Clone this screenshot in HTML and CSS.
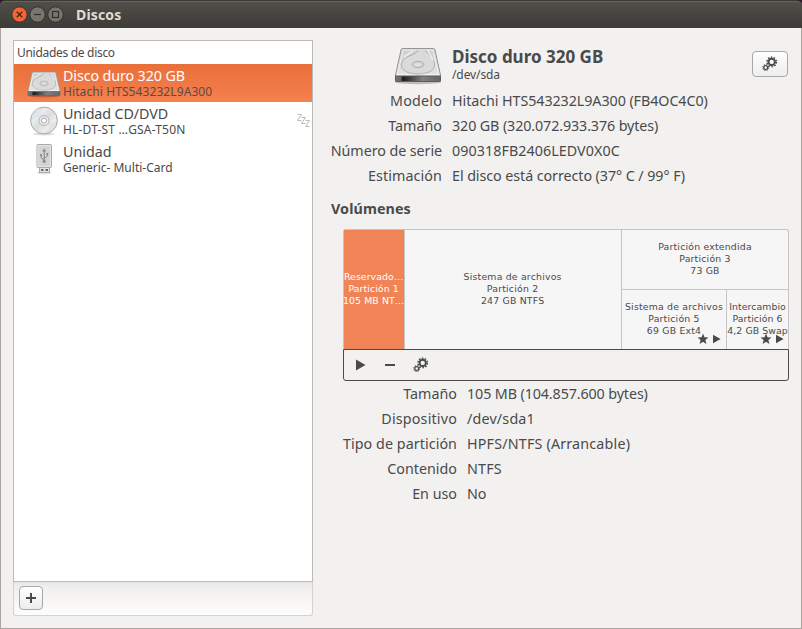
FILE: index.html
```html
<!DOCTYPE html>
<html lang="es">
<head>
<meta charset="utf-8">
<title>Discos</title>
<link rel="stylesheet" href="styles.css">
</head>
<body>
<svg class="defs" width="0" height="0" aria-hidden="true">
  <defs>
    <linearGradient id="metal" x1="0" y1="0" x2="0" y2="1"><stop offset="0" stop-color="#cdcdcd"/><stop offset="1" stop-color="#e9e9e9"/></linearGradient>
    <linearGradient id="front" x1="0" y1="0" x2="1" y2="0"><stop offset="0" stop-color="#777"/><stop offset=".12" stop-color="#666"/><stop offset=".16" stop-color="#1c1c1c"/><stop offset=".6" stop-color="#808080"/><stop offset="1" stop-color="#666"/></linearGradient>
    <linearGradient id="disc" x1="0" y1="0" x2="1" y2="1"><stop offset="0" stop-color="#c6c6c6"/><stop offset=".3" stop-color="#ececec"/><stop offset=".5" stop-color="#dcdcdc"/><stop offset=".7" stop-color="#ededed"/><stop offset="1" stop-color="#c4c4c4"/></linearGradient>
  </defs>
  <symbol id="hdd" viewBox="0 0 48 38">
    <ellipse cx="24" cy="35" rx="23" ry="2.200" fill="#000" opacity=".22"/>
    <path d="M8.500 1.500H39.500Q40.500 1.500 40.900 2.700L46.500 28V34.500H1.500V28L7.100 2.700Q7.500 1.500 8.500 1.500Z" fill="url(#metal)" stroke="#959595"/>
    <path d="M1.500 29H46.500V33.500Q46.500 34.500 45.500 34.500H2.500Q1.500 34.500 1.500 33.500Z" fill="url(#front)" stroke="#5d5d5d"/>
    <path d="M9 3H39L44.500 27.500H3.500Z" fill="none" stroke="#f2f2f2"/>
    <path d="M24 3C22 9 9 8 7.500 17C7 24 15 27 24 27S41 24 40.500 17C40 10 34 8 31 3" fill="#dadada" stroke="#b0b0b0"/>
    <path d="M10 10L19 4M34 4L39 13" stroke="#f4f4f4" stroke-width="1.300"/>
    <ellipse cx="24" cy="17.500" rx="5.800" ry="3.200" fill="#d3d3d3" stroke="#adadad"/>
    <ellipse cx="24" cy="17.500" rx="3" ry="1.500" fill="#e2e2e2"/>
  </symbol>
  <symbol id="gears" viewBox="0 0 16 16">
    <circle cx="9.700" cy="5.900" r="3.200" fill="none" stroke="#4a4a4a" stroke-width="2"/>
    <circle cx="9.700" cy="5.900" r="4.700" fill="none" stroke="#4a4a4a" stroke-width="1.500" stroke-dasharray="1.550 1.403"/>
    <circle cx="3.700" cy="11.600" r="1.900" fill="none" stroke="#4a4a4a" stroke-width="1.200"/>
    <circle cx="3.700" cy="11.600" r="2.900" fill="none" stroke="#4a4a4a" stroke-width="1.100" stroke-dasharray="1.150 1.128"/>
  </symbol>
  <symbol id="star" viewBox="0 0 12 12"><path d="M6 .5L7.500 4.300L11.500 4.600L8.400 7.100L9.400 11L6 8.800L2.600 11L3.600 7.100L.5 4.600L4.500 4.300Z" fill="#4a4a4a"/></symbol>
  <symbol id="play" viewBox="0 0 10 12"><path d="M0 .6L9.500 6L0 11.400Z" fill="#4a4a4a"/></symbol>
</svg>

<div class="window">
  <header class="titlebar">
    <svg class="controls" width="54" height="18" viewBox="0 0 54 18">
      <circle cx="9.500" cy="8.500" r="7.700" fill="#f0643a" stroke="#30302c"/>
      <path d="M6.800 5.800L12.200 11.200M12.200 5.800L6.800 11.200" stroke="#40241b" stroke-width="1.300"/>
      <circle cx="27.500" cy="8.500" r="7.700" fill="#77756e" stroke="#30302c"/>
      <path d="M24 8.500H31" stroke="#30302c" stroke-width="1.200"/>
      <circle cx="45.500" cy="8.500" r="7.700" fill="#77756e" stroke="#30302c"/>
      <rect x="42.500" y="5.500" width="6" height="6" fill="none" stroke="#30302c" stroke-width="1.200"/>
    </svg>
    <h1>Discos</h1>
  </header>

  <main>
    <aside>
      <div class="list">
        <h2>Unidades de disco</h2>
        <div class="drive selected">
          <span class="pic"><svg class="low" width="34" height="27"><use href="#hdd"/></svg></span>
          <div><b class="tight">Disco duro 320 GB</b><small class="wide">Hitachi HTS543232L9A300</small></div>
        </div>
        <div class="drive">
          <span class="pic"><svg width="30" height="30" viewBox="0 0 30 30"><ellipse cx="15" cy="28" rx="11" ry="1.500" fill="#ddd"/><circle cx="15" cy="14.500" r="13.400" fill="url(#disc)" stroke="#a9a9a9"/><path d="M15 14.500L3 10A13 13 0 0 1 7 4Z" fill="#d6e6ee" opacity=".8"/><path d="M15 14.500L7 4A13 13 0 0 1 10 2.500Z" fill="#eedfe6" opacity=".8"/><path d="M15 14.500L27 18A13 13 0 0 1 23 25Z" fill="#e6dce8" opacity=".8"/><circle cx="15" cy="14.500" r="5" fill="#ededed" stroke="#b5b5b5"/><circle cx="15" cy="14.500" r="2.600" fill="#fff" stroke="#aaa"/></svg></span>
          <div><b class="tight">Unidad CD/DVD</b><small class="wider">HL-DT-ST …GSA-T50N</small></div>
          <svg class="zzz" width="14" height="14" viewBox="0 0 14 14" fill="none" stroke="#bbb"><path d="M.5 .5H4.500L.5 6.500H4.500M4.500 3.500H8.500L4.500 9.500H8.500M8.500 6.500H12.500L8.500 12.500H12.500"/></svg>
        </div>
        <div class="drive">
          <span class="pic"><svg width="18" height="32" viewBox="0 0 18 32"><ellipse cx="9" cy="30" rx="7.500" ry="1.500" fill="#e2e2e2"/><rect x="4.500" y="23" width="10" height="6.500" fill="#e4e4e4" stroke="#aaa"/><path d="M6 26h2.500v2h-2.500zM10.500 26h2.500v2h-2.500z" fill="#666"/><rect x="2" y="1.500" width="14.500" height="23" rx="1" fill="#d3d3d3" stroke="#a8a8a8"/><path d="M3 23.500V2.500H15.500V23.500Z" fill="none" stroke="#e6e6e6"/><path d="M9.200 8V19M9.200 17L6 14.500V12M9.200 15.500L12.400 13V11" fill="none" stroke="#858585"/><path d="M9.200 5.500L11 8.500H7.400Z" fill="#858585"/><circle cx="9.200" cy="18.500" r="1.400" fill="#858585"/><circle cx="6" cy="12" r="1.100" fill="#858585"/><path d="M11.500 10h1.800v1.800h-1.800z" fill="#858585"/></svg></span>
          <div><b>Unidad</b><small>Generic- Multi-Card</small></div>
        </div>
      </div>
      <div class="listbar"><button class="add" aria-label="+"><svg width="10" height="10"><path d="M5 0V10M0 5H10" stroke="#4a4a4a" stroke-width="2"/></svg></button></div>
    </aside>

    <section class="details">
      <div class="head">
        <svg width="48" height="38"><use href="#hdd"/></svg>
        <div class="name"><h2>Disco duro 320 GB</h2><p>/dev/sda</p></div>
        <button class="gear"><svg width="16" height="16"><use href="#gears"/></svg></button>
      </div>
      <dl class="info">
        <dt class="wider">Modelo</dt><dd class="snug">Hitachi HTS543232L9A300 (FB4OC4C0)</dd>
        <dt>Tamaño</dt><dd class="tight">320 GB (320.072.933.376 bytes)</dd>
        <dt class="snug">Número de serie</dt><dd class="loose">090318FB2406LEDV0X0C</dd>
        <dt class="wide">Estimación</dt><dd class="snug">El disco está correcto (37° C / 99° F)</dd>
      </dl>
      <h3>Volúmenes</h3>
      <div class="volumes">
        <div class="map">
          <div class="part current"><p>Reservado…<br>Partición 1<br>105 MB NT…</p></div>
          <div class="part main-part"><p>Sistema de archivos<br>Partición 2<br>247 GB NTFS</p></div>
          <div class="extended">
            <div class="part"><p>Partición extendida<br>Partición 3<br>73 GB</p></div>
            <div class="logical">
              <div class="part"><p>Sistema de archivos<br>Partición 5<br>69 GB Ext4</p><span class="marks"><svg width="12" height="12"><use href="#star"/></svg><svg width="8" height="10"><use href="#play"/></svg></span></div>
              <div class="part swap"><p>Intercambio<br>Partición 6<br>4,2 GB Swap</p><span class="marks"><svg width="12" height="12"><use href="#star"/></svg><svg width="8" height="10"><use href="#play"/></svg></span></div>
            </div>
          </div>
        </div>
        <div class="tools">
          <svg width="10" height="12"><use href="#play"/></svg>
          <svg width="10" height="2"><path d="M0 1H10" stroke="#4a4a4a" stroke-width="2"/></svg>
          <svg width="16" height="16"><use href="#gears"/></svg>
        </div>
      </div>
      <dl class="info volume">
        <dt>Tamaño</dt><dd class="tight">105 MB (104.857.600 bytes)</dd>
        <dt class="wider">Dispositivo</dt><dd class="wider">/dev/sda1</dd>
        <dt class="loose">Tipo de partición</dt><dd class="wider">HPFS/NTFS (Arrancable)</dd>
        <dt>Contenido</dt><dd class="wider">NTFS</dd>
        <dt>En uso</dt><dd>No</dd>
      </dl>
    </section>
  </main>
</div>
</body>
</html>
```
FILE: styles.css
```css
* { box-sizing: border-box; margin: 0; padding: 0; }
body { width: 802px; height: 629px; overflow: hidden; background: #2c1a28; color: #4a4a4a; font: 14.3px/25px "Noto Sans", sans-serif; white-space: nowrap; }
.defs { display: block; width: 0; height: 0; position: absolute; }
.window { height: 629px; display: flex; flex-direction: column; }
.titlebar { height: 28px; padding: 0 0 0 10px; display: flex; align-items: center; gap: 12px; background: linear-gradient(#504f49, #3c3b37); border-top: 1px solid #3a3935; border-radius: 5px 5px 0 0; box-shadow: inset 0 1px #64635c; }
.titlebar h1 { color: #dfdbd2; font-size: 14px; line-height: 26px; letter-spacing: .15px; }
main { flex: 1; display: flex; padding: 12px 11px 12px 12px; background: #f2f1f0; border: solid #aaa69f; border-width: 0 1px 1px; }
aside { width: 300px; display: flex; flex-direction: column; }
.list { flex: 1; background: #fff; border: 1px solid #bcb9b5; }
.list h2 { height: 23px; padding-left: 3px; font-size: 12px; font-weight: 400; line-height: 23px; letter-spacing: -.3px; }
.drive { height: 38px; display: flex; align-items: center; }
.pic { width: 49px; display: flex; justify-content: center; padding-left: 11px; }
.pic svg { flex: none; }
.pic .low { margin-top: 3px; }
.drive b { display: block; font-weight: 400; line-height: 18px; height: 18px; }
.drive small { display: block; font-size: 12px; line-height: 14px; height: 14px; }
.selected { background: linear-gradient(#e96f3a, #f5814f); }
.selected b { color: #fff; }
.selected small { color: #5c4a42; }
.tight { letter-spacing: -.11px; }
.snug { letter-spacing: -.07px; }
.loose { letter-spacing: .06px; }
.wide { letter-spacing: .09px; }
.wider { letter-spacing: .18px; }
.zzz { margin: 0 1px 0 auto; }
.listbar { height: 34px; padding: 4px 5px; background: linear-gradient(#e6e5e3, #efeeec 4px, #fdfdfd); border: 1px solid #d5d3d0; border-top: 0; border-radius: 0 0 3px 3px; }
button { display: flex; align-items: center; justify-content: center; border: 1px solid #aaa8a4; border-radius: 4px; background: linear-gradient(#fefefe, #ededed); }
.add { width: 24px; height: 24px; }
.details { flex: 1; padding-left: 18px; }
.head { height: 48px; display: flex; align-items: flex-start; }
.head > svg { margin: 7px 10px 0 63px; }
.name h2 { font-size: 17px; line-height: 24px; margin-top: 5px; }
.name p { font-size: 12px; line-height: 14px; margin-top: -1px; letter-spacing: -.1px; }
.gear { width: 36px; height: 26px; margin: 11px 2px 0 auto; }
.info { display: grid; grid-template-columns: 111px 1fr; column-gap: 10px; }
.info dt { justify-self: end; }
.info dd { justify-self: start; }
h3 { font-size: 14.3px; line-height: 25px; margin-top: 8px; letter-spacing: .1px; }
.volumes { width: 446px; margin: 8px 0 0 12px; }
.map { height: 120px; display: flex; background: #f6f6f6; border: 1px solid #c6c5c3; border-bottom: 0; border-radius: 3px 3px 0 0; }
.part { flex: 1; position: relative; display: flex; align-items: center; justify-content: center; padding-bottom: 2px; text-align: center; font: 9.33px/12px "DejaVu Sans", sans-serif; letter-spacing: .2px; }
.part.current { flex: 0 0 60px; background: #f08456; color: #fff; border-right: 1px solid #c6c5c3; letter-spacing: .1px; }
.part.current p { margin-left: -1px; }
.main-part { padding-right: 1px; }
.extended { width: 167px; border-left: 1px solid #c6c5c3; display: flex; flex-direction: column; }
.logical { flex: 0 0 60px; display: flex; border-top: 1px solid #c6c5c3; }
.logical .swap { flex: 0 0 62px; border-left: 1px solid #c6c5c3; letter-spacing: .08px; }
.marks { position: absolute; right: 5px; bottom: 4px; display: flex; align-items: center; gap: 4px; }
.swap .marks { right: 4px; }
.tools { height: 32px; padding-left: 12px; display: flex; align-items: center; gap: 19px; border: 1px solid #4a4a4a; border-radius: 0 0 3px 3px; }
.tools svg:last-child { margin-left: -1px; }
.volume { grid-template-columns: 126px 1fr; }
```
